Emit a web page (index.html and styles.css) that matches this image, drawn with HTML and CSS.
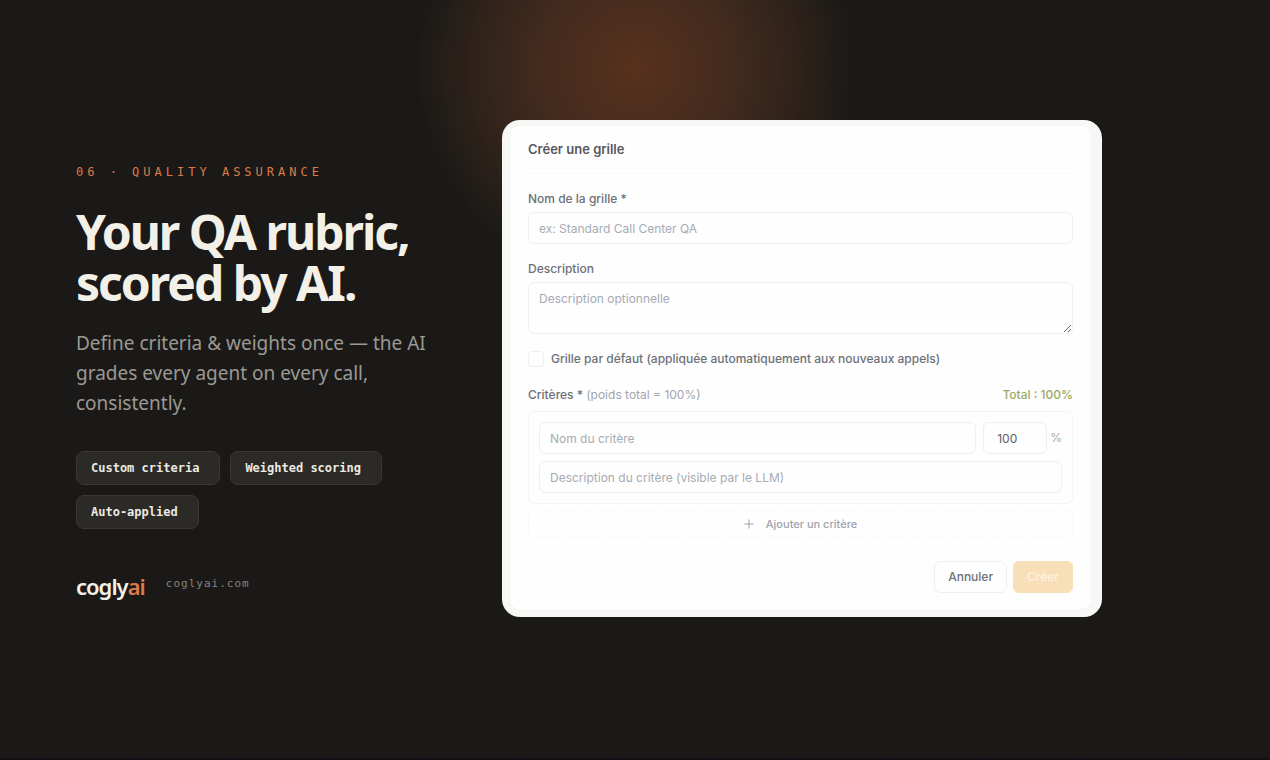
FILE: index.html
```html
<!DOCTYPE html>
<html lang="en">
<head>
<meta charset="utf-8">
<meta name="viewport" content="width=device-width, initial-scale=1">
<title>Your QA rubric, scored by AI</title>
<link rel="stylesheet" href="styles.css">
</head>
<body>
<main class="slide">
  <section class="copy">
    <p class="eyebrow">06 · QUALITY ASSURANCE</p>
    <h1 class="headline">Your QA rubric,<br>scored by AI.</h1>
    <p class="lead">Define criteria &amp; weights once — the AI grades every agent on every call, consistently.</p>
    <ul class="chips">
      <li class="chip">Custom criteria</li>
      <li class="chip">Weighted scoring</li>
      <li class="chip">Auto-applied</li>
    </ul>
    <div class="brand">
      <span class="logo">cogly<span class="logo-accent">ai</span></span>
      <span class="domain">coglyai.com</span>
    </div>
  </section>

  <div class="frame">
    <form class="dialog" lang="fr">
      <h2 class="title">Créer une grille</h2>
      <div class="field">
        <label class="label" for="name">Nom de la grille *</label>
        <input class="control" id="name" type="text" placeholder="ex: Standard Call Center QA">
      </div>
      <div class="field">
        <label class="label" for="desc">Description</label>
        <textarea class="control area" id="desc" placeholder="Description optionnelle"></textarea>
      </div>
      <div class="check-row">
        <input class="check" id="default" type="checkbox">
        <label class="label" for="default">Grille par défaut (appliquée automatiquement aux nouveaux appels)</label>
      </div>
      <div class="criteria-head">
        <span class="label">Critères * <span class="hint">(poids total = 100%)</span></span>
        <span class="total">Total : 100%</span>
      </div>
      <div class="criterion">
        <div class="criterion-row">
          <input class="control" type="text" aria-label="Nom du critère" placeholder="Nom du critère">
          <div class="weight-group">
            <input class="control weight" type="text" inputmode="numeric" aria-label="Poids" value="100">
            <span class="percent">%</span>
          </div>
        </div>
        <input class="control" type="text" aria-label="Description du critère" placeholder="Description du critère (visible par le LLM)">
      </div>
      <button class="add" type="button">
        <svg class="plus" viewBox="0 0 10 10" aria-hidden="true"><path d="M5 .5v9M.5 5h9"/></svg>
        Ajouter un critère
      </button>
      <div class="actions">
        <button class="button" type="button">Annuler</button>
        <button class="button primary" type="button">Créer</button>
      </div>
    </form>
  </div>
</main>
</body>
</html>
```
FILE: styles.css
```css
* {
  box-sizing: border-box;
}

body {
  margin: 0;
  background: #1a1917;
  color: #f3f0e8;
  font-family: "Noto Sans", "Open Sans", sans-serif;
}

.slide {
  min-height: 100vh;
  display: grid;
  grid-template-columns: minmax(0, 370px) minmax(0, 600px);
  gap: 56px;
  align-items: center;
  padding: 20px 76px 41px;
  border-bottom: 2px solid #140f14;
  background:
    radial-gradient(circle 220px at 50% 68px, #57311d 0%, #442b1e 42%, #2e221a 75%, transparent 100%),
    repeating-linear-gradient(90deg, transparent 0 46px, #1c1b18 46px 47px),
    repeating-linear-gradient(180deg, transparent 0 46px, #1c1b18 46px 47px);
}

.copy {
  padding-top: 26px;
}

.eyebrow {
  margin: 0 0 24px;
  color: #dc7b48;
  font: 12px/20px "DejaVu Sans Mono", monospace;
  letter-spacing: 4px;
}

.headline {
  margin: 0;
  font-size: 48px;
  line-height: 51px;
  font-weight: 700;
  letter-spacing: -2px;
  white-space: nowrap;
}

.lead {
  margin: 20px 0 0;
  color: #9b9993;
  font-size: 19px;
  line-height: 30px;
}

.chips {
  display: flex;
  flex-wrap: wrap;
  gap: 10px;
  margin: 33px 0 0;
  padding: 0;
  list-style: none;
}

.chip {
  padding: 7px 20px 7px 14px;
  border: 1px solid #3a3935;
  border-radius: 8px;
  background: #2b2a26;
  color: #ece9e1;
  font: bold 12px/18px "DejaVu Sans Mono", monospace;
}

.brand {
  display: flex;
  align-items: center;
  gap: 21px;
  margin-top: 42px;
}

.logo {
  font-size: 22px;
  line-height: 30px;
  font-weight: 600;
  letter-spacing: -1px;
}

.logo-accent {
  color: #dc7b48;
}

.domain {
  padding-bottom: 4px;
  color: #85837d;
  font: 11px/20px "DejaVu Sans Mono", monospace;
  letter-spacing: 1px;
}

.frame {
  padding: 6px 12px 8px 9px;
  border-radius: 18px;
  background: #f7f7f5;
}

.dialog {
  display: flex;
  flex-direction: column;
  padding: 13px 17px 16px;
  border-radius: 8px;
  background: #fefefe;
  font-family: Inter, sans-serif;
  font-size: 12px;
  line-height: 20px;
}

.title {
  margin: 0 0 15px;
  padding-bottom: 14px;
  border-bottom: 1px dashed #f5f5f5;
  color: #56585c;
  font-size: 13px;
  line-height: 20px;
  font-weight: 600;
}

.field {
  display: flex;
  flex-direction: column;
  gap: 3px;
  margin-bottom: 15px;
}

.label {
  color: #6c7077;
  font-weight: 500;
}

.control {
  width: 100%;
  height: 32px;
  padding: 0 10px;
  border: 1px solid #eeeff0;
  border-radius: 6px;
  background: #fefefe;
  color: #5b5f66;
  font: inherit;
}

.control::placeholder {
  color: #a5abb5;
  opacity: 1;
}

.area {
  height: 52px;
  padding: 6px 10px;
  resize: vertical;
}

.check-row {
  display: flex;
  align-items: center;
  gap: 7px;
}

.check {
  appearance: none;
  width: 16px;
  height: 16px;
  margin: 0;
  border: 1px solid #eeeff0;
  border-radius: 4px;
}

.criteria-head {
  display: flex;
  justify-content: space-between;
  margin: 16px 0 6px;
}

.hint {
  color: #a0a6b0;
  font-weight: 400;
}

.total {
  color: #9aa965;
  font-weight: 500;
}

.criterion {
  display: flex;
  flex-direction: column;
  gap: 7px;
  padding: 10px;
  border: 1px solid #f3f4f4;
  border-radius: 6px;
}

.criterion-row {
  display: flex;
  align-items: center;
  gap: 7px;
}

.weight-group {
  display: flex;
  flex: none;
  align-items: center;
  gap: 3px;
}

.weight {
  width: 64px;
  padding: 0 13px;
}

.percent {
  color: #a5a8ae;
}

.add {
  display: flex;
  align-items: center;
  justify-content: center;
  gap: 12px;
  height: 28px;
  margin-top: 6px;
  padding: 0;
  border: 1px dashed #f5f5f5;
  border-radius: 6px;
  background: none;
  color: #9ea3ab;
  font: 500 11px/20px Inter, sans-serif;
}

.plus {
  width: 10px;
  height: 10px;
  fill: none;
  stroke: #9ea3ab;
}

.actions {
  display: flex;
  justify-content: flex-end;
  gap: 6px;
  margin-top: 23px;
}

.button {
  height: 32px;
  padding: 0 13px;
  border: 1px solid #eeeff0;
  border-radius: 6px;
  background: #fefefe;
  color: #6c7077;
  font: 500 12px/20px Inter, sans-serif;
}

.primary {
  border-color: #f8dfb8;
  background: #f8dfb8;
  color: #fdf3e2;
}
```
